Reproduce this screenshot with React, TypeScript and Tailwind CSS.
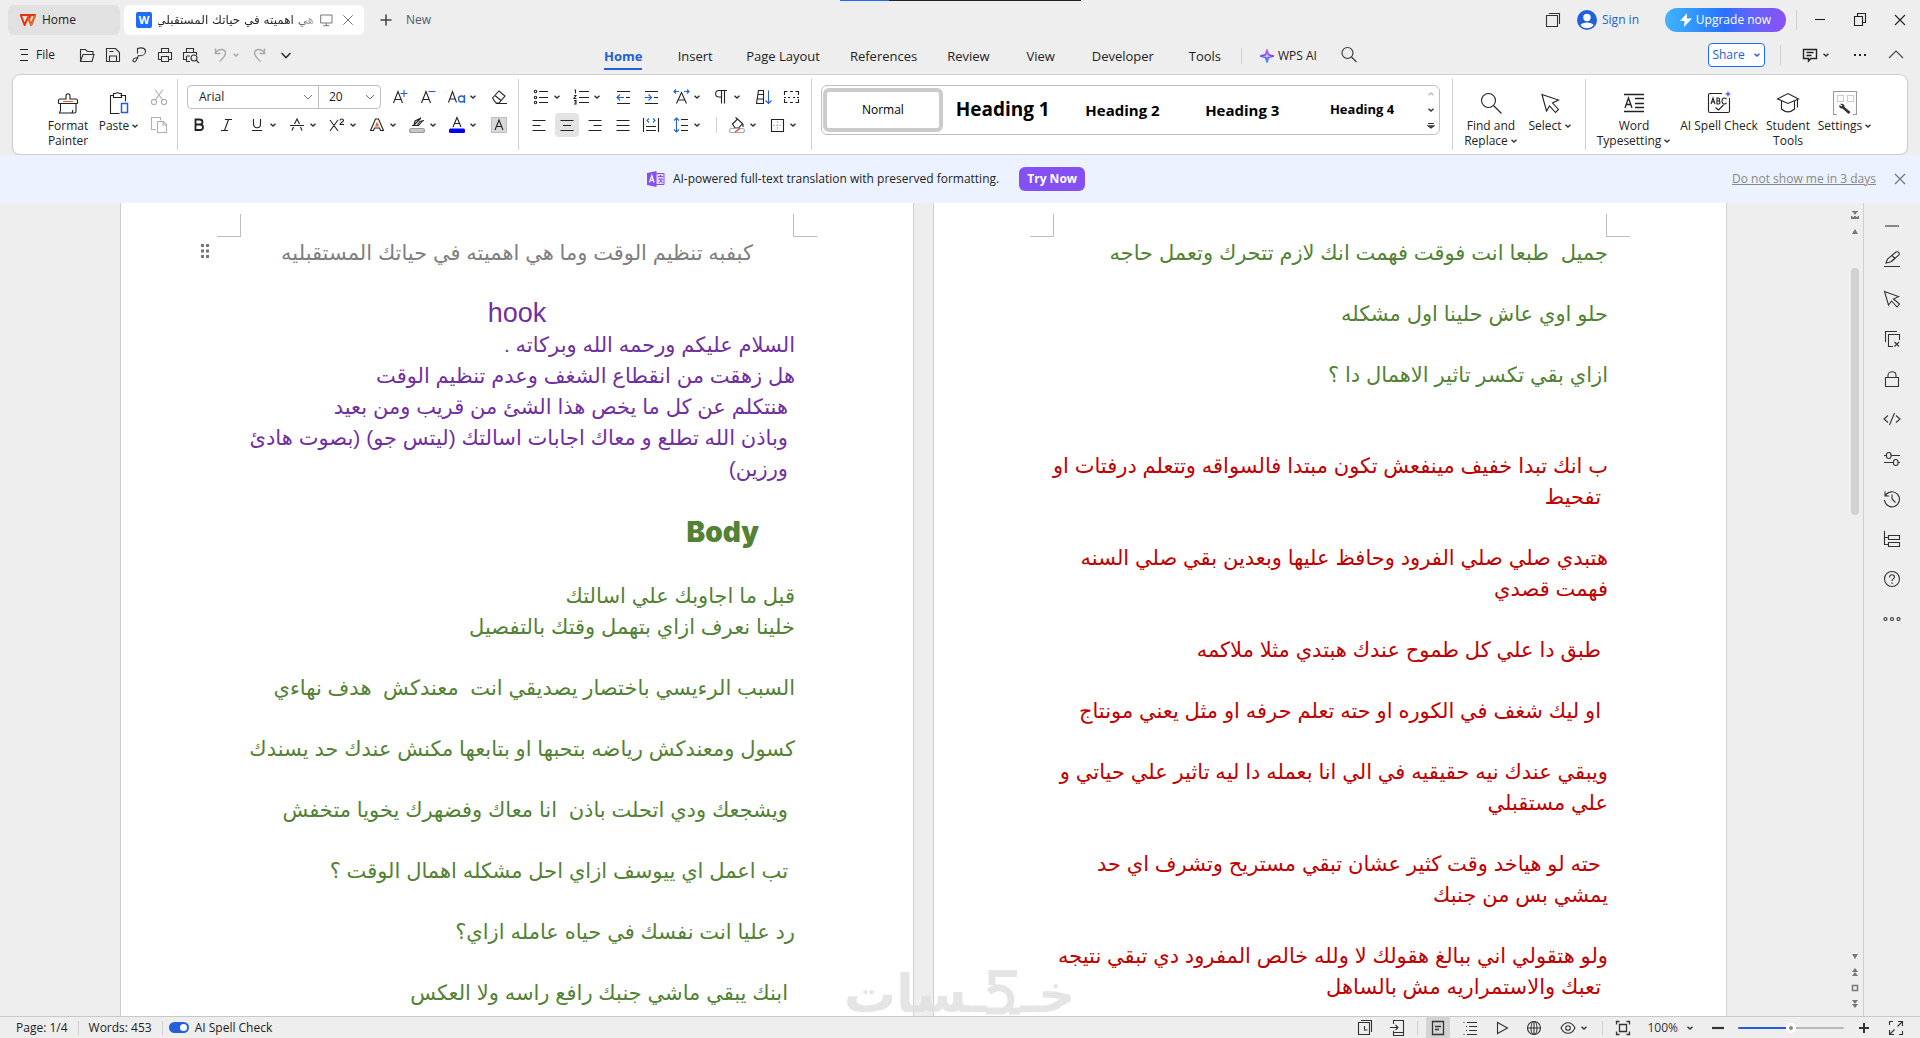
import type { ReactNode } from 'react';
import clsx from 'clsx';

type Line = { text: string; tone?: string; indent?: boolean; center?: boolean; title?: boolean };

const GREEN = 'text-[#538135]';
const PURPLE = 'text-[#7030a0]';
const RED = 'text-[#c00000]';

const blank: Line = { text: '' };

const pageOne: Line[] = [
  { text: 'كبفبه تنظيم الوقت وما هي اهميته في حياتك المستقبليه', tone: 'text-[#7f7f7f]', center: true },
  blank,
  { text: 'hook', tone: PURPLE, center: true },
  { text: 'السلام عليكم ورحمه الله وبركاته .', tone: PURPLE },
  { text: 'هل زهقت من انقطاع الشغف وعدم تنظيم الوقت', tone: PURPLE },
  { text: 'هنتكلم عن كل ما يخص هذا الشئ من قريب ومن بعيد', tone: PURPLE, indent: true },
  { text: 'وباذن الله تطلع و معاك اجابات اسالتك (ليتس جو) (بصوت هادئ', tone: PURPLE, indent: true },
  { text: 'ورزين)', tone: PURPLE, indent: true },
  blank,
  { text: 'Body', tone: GREEN, title: true },
  blank,
  { text: 'قبل ما اجاوبك علي اسالتك', tone: GREEN },
  { text: 'خلينا نعرف ازاي بتهمل وقتك بالتفصيل', tone: GREEN },
  blank,
  { text: 'السبب الرءيسي باختصار يصديقي انت  معندكش  هدف نهاءي', tone: GREEN },
  blank,
  { text: 'كسول ومعندكش رياضه بتحبها او بتابعها مكنش عندك حد يسندك', tone: GREEN },
  blank,
  { text: 'ويشجعك ودي اتحلت باذن  انا معاك وفضهرك يخويا متخفش', tone: GREEN, indent: true },
  blank,
  { text: 'تب اعمل اي ييوسف ازاي احل مشكله اهمال الوقت ؟', tone: GREEN, indent: true },
  blank,
  { text: 'رد عليا انت نفسك في حياه عامله ازاي؟', tone: GREEN },
  blank,
  { text: 'ابنك يبقي ماشي جنبك رافع راسه ولا العكس', tone: GREEN, indent: true },
];

const pageTwo: Line[] = [
  { text: 'جميل  طبعا انت فوقت فهمت انك لازم تتحرك وتعمل حاجه', tone: GREEN },
  blank,
  { text: 'حلو اوي عاش حلينا اول مشكله', tone: GREEN },
  blank,
  { text: 'ازاي بقي تكسر تاثير الاهمال دا ؟', tone: GREEN },
  blank,
  blank,
  { text: 'ب انك تبدا خفيف مينفعش تكون مبتدا فالسواقه وتتعلم درفتات او', tone: RED },
  { text: 'تفحيط', tone: RED, indent: true },
  blank,
  { text: 'هتبدي صلي صلي الفرود وحافظ عليها وبعدين بقي صلي السنه', tone: RED },
  { text: 'فهمت قصدي', tone: RED },
  blank,
  { text: 'طبق دا علي كل طموح عندك هبتدي مثلا ملاكمه', tone: RED, indent: true },
  blank,
  { text: 'او ليك شغف في الكوره او حته تعلم حرفه او مثل يعني مونتاج', tone: RED, indent: true },
  blank,
  { text: 'ويبقي عندك نيه حقيقيه في الي انا بعمله دا ليه تاثير علي حياتي و', tone: RED },
  { text: 'علي مستقبلي', tone: RED },
  blank,
  { text: 'حته لو هياخد وقت كثير عشان تبقي مستريح وتشرف اي حد', tone: RED, indent: true },
  { text: 'يمشي بس من جنبك', tone: RED },
  blank,
  { text: 'ولو هتقولي اني ببالغ هقولك لا ولله خالص المفرود دي تبقي نتيجه', tone: RED },
  { text: 'تعبك والاستمراريه مش بالساهل', tone: RED, indent: true },
];

const menuTabs = ['Home', 'Insert', 'Page Layout', 'References', 'Review', 'View', 'Developer', 'Tools'];

function Icon({ children, className = 'size-6' }: { children: ReactNode; className?: string }) {
  return (
    <svg viewBox="0 0 24 24" fill="none" stroke="currentColor" strokeWidth={1.1} className={clsx('shrink-0', className)} aria-hidden="true">
      {children}
    </svg>
  );
}

function Chevron({ className = 'text-[#333]' }: { className?: string }) {
  return (
    <svg viewBox="0 0 8 8" fill="none" stroke="currentColor" strokeWidth={1.5} className={clsx('size-2 shrink-0', className)} aria-hidden="true">
      <path d="M1.5 2.8 4 5l2.5-2.2" />
    </svg>
  );
}

function Tool({ label, children, className = 'w-7' }: { label: string; children: ReactNode; className?: string }) {
  return (
    <button aria-label={label} className={clsx('h-6 shrink-0 flex items-center justify-center rounded', className)}>
      <Icon>{children}</Icon>
    </button>
  );
}

function DropTool({ label, children }: { label: string; children: ReactNode }) {
  return (
    <button aria-label={label} className="w-10 h-6 shrink-0 flex items-center rounded">
      <Icon>{children}</Icon>
      <Chevron />
    </button>
  );
}

function BigTool({ lines, drop, className, children }: { lines: string[]; drop?: boolean; className: string; children: ReactNode }) {
  return (
    <button className={clsx('shrink-0 flex flex-col items-center pt-4 text-xs leading-[15px] whitespace-nowrap', className)}>
      <Icon>{children}</Icon>
      <span className="mt-[3px] flex flex-col items-center">
        {lines.map((line, i) => (
          <span key={line} className="flex items-center">
            {line}
            {drop && i === lines.length - 1 && <Chevron className="ml-0.5 text-[#333]" />}
          </span>
        ))}
      </span>
    </button>
  );
}

function Rule({ className = 'h-4' }: { className?: string }) {
  return <span className={clsx('w-px shrink-0 bg-[#d0d0d0]', className)} />;
}

function TitleBar() {
  return (
    <header className="h-10 flex items-center pl-2">
      <button className="w-28 h-[30px] flex items-center gap-1.5 pl-3 rounded-md bg-[#e1e1e1]">
        <svg viewBox="0 0 16 12" className="w-4 h-3" fill="none" aria-hidden="true">
          <path d="M0 1h10M0.8 1 4.6 11 8 3.5 11.2 11 15.2 1h-4.5L8.6 6" stroke="#e2340f" strokeWidth={2} />
          <path d="M8 3.5 11.2 11 15.2 1" stroke="#f26a1b" strokeWidth={1.6} />
        </svg>
        Home
      </button>
      <div className="ml-1 w-60 h-[30px] flex items-center pl-3 rounded-md bg-white">
        <span className="size-4 shrink-0 rounded-xs bg-[#1d6bff] text-white text-[11px] leading-4 font-bold text-center">W</span>
        <span dir="rtl" className="ml-1.5 w-[156px] shrink-0 overflow-hidden whitespace-nowrap font-['DejaVu_Sans',sans-serif] text-xs leading-5 bg-linear-to-l from-[#bbb] to-[#222] to-15% bg-clip-text text-transparent">
          هي اهميته في حياتك المستقبلي
        </span>
        <Icon className="ml-1 size-4 text-[#777]">
          <path d="M4 4.500h17v12H4zM8 20.500h9M12.500 17v3" strokeWidth={1.5} />
        </Icon>
        <button aria-label="Close tab" className="ml-1.5 text-[#777]">
          <Icon className="size-4">
            <path d="m5 5 14 14M19 5 5 19" strokeWidth={1.5} />
          </Icon>
        </button>
      </div>
      <button className="ml-4 flex items-center gap-2 text-[#4a5a70]">
        <Icon className="size-3 text-[#444]">
          <path d="M12 1v22M1 12h22" strokeWidth={3} />
        </Icon>
        <span className="pl-1.5">New</span>
      </button>

      <div className="ml-auto flex items-center">
        <button aria-label="Tab list" className="text-[#333]">
          <Icon>
            <path d="M5.500 7.500h11v11h-11zM8 5.500h10.500V16" />
          </Icon>
        </button>
        <button className="ml-3 flex items-center gap-[5px] text-[#2160d8]">
          <svg viewBox="0 0 20 20" className="size-5" aria-hidden="true">
            <circle cx="10" cy="10" r="10" fill="#2160d8" />
            <circle cx="10" cy="7.500" r="3.700" fill="#fff" />
            <path d="M3.500 15c1.500-3.500 11.500-3.500 13 0-3 4.300-10 4.300-13 0z" fill="#fff" />
          </svg>
          Sign in
        </button>
        <button className="ml-[26px] w-[121px] h-6 flex items-center justify-center gap-1 rounded-full bg-linear-to-r from-[#41b4ff] via-[#2a70ff] to-[#8a4ff5] text-white">
          <svg viewBox="0 0 12 14" className="w-3 h-3.5" fill="currentColor" aria-hidden="true">
            <path d="M7 0 0 8h4.500L4 14l8-8.500H7z" />
          </svg>
          Upgrade now
        </button>
        <Rule className="ml-2.5 mr-[3px] h-5" />
        <button aria-label="Minimize" className="w-10 flex justify-center text-[#222]">
          <Icon><path d="M7 11.500h10" /></Icon>
        </button>
        <button aria-label="Restore" className="w-10 flex justify-center text-[#222]">
          <Icon><path d="M6.500 8.500h8v9h-8zM9.500 8.500v-3h8v9h-3" /></Icon>
        </button>
        <button aria-label="Close" className="w-10 flex justify-center text-[#222]">
          <Icon><path d="m7 7 10 10M17 7 7 17" /></Icon>
        </button>
      </div>
    </header>
  );
}

function MenuBar() {
  return (
    <nav className="h-[34px] flex items-center pb-1">
      <div className="flex-1 basis-0 flex items-center text-[#333]">
        <button className="ml-3 flex items-center text-[#222]">
          <Icon><path d="M8 6.500h8M9 11.500h7M8 17.500h8" /></Icon>
          File
        </button>
        <Rule className="ml-2.5 mr-2" />
        <Tool label="Open" className="w-[26px]">
          <path d="M5.500 18.500v-12h5l2 2h5.500v3M5.500 18.500 8 11.500h11l-2 7z" />
        </Tool>
        <Tool label="Save" className="w-[26px]">
          <path d="M5.500 5.500h9l4 4v9h-13zM8.500 18v-5h7v5M8.500 8.500h4" />
        </Tool>
        <Tool label="Export to PDF" className="w-[26px]">
          <path d="M10.500 10.500v-5c5-1.500 8.500 0 8 3.500-.5 3-4 4-7 3.500-1 0-1.500 6.500-4 6.500-2 0-2.500-3.500 1-4h3" />
        </Tool>
        <Tool label="Print" className="w-[26px]">
          <path d="M8.500 9.500v-4h7v4M8 16.500H5.500v-7h13v7H16M8.500 13.500h7v5h-7z" />
        </Tool>
        <Tool label="Print preview" className="w-[26px]">
          <path d="M7.500 9.500v-4h7v4M7 16.500H4.500v-7h13V12M7.500 13v5.500H11M7.500 13H11" />
          <circle cx="15" cy="15" r="3" />
          <path d="m17 17 3 3" />
        </Tool>
        <span className="ml-1 flex text-[#a8a8a8]">
          <button aria-label="Undo" className="w-10 flex items-center">
            <Icon><path d="M7.500 5.500v5h5M7.500 10c3-5 10-4.500 10 0 0 3-2 5-6 8.500" strokeWidth={1.4} /></Icon>
            <Chevron className="text-[#a8a8a8]" />
          </button>
          <Tool label="Redo" className="w-6">
            <path d="M16.500 5.500v5h-5M16.500 10c-3-5-10-4.500-10 0 0 3 2 5 6 8.500" strokeWidth={1.4} />
          </Tool>
        </span>
        <Tool label="More commands" className="w-7">
          <path d="m7.500 10 4.500 4.500 4.500-4.500" strokeWidth={1.6} />
        </Tool>
        <Rule className="ml-1.5" />
      </div>

      <div className="flex items-center pt-0.5">
        {menuTabs.map((tab, i) => (
          <button key={tab} className={clsx('min-w-[72px] px-[15px] flex justify-center whitespace-nowrap text-[13px]', i === 0 ? 'text-[#2160d8] font-bold' : 'text-[#222]')}>
            <span className={clsx('pt-1 pb-0.5 leading-5 border-b-2', i === 0 ? 'border-[#2160d8]' : 'border-transparent')}>{tab}</span>
          </button>
        ))}
        <Rule className="h-4" />
        <button className="ml-[18px] mr-4 flex items-center gap-1 text-[#222] whitespace-nowrap">
          <svg viewBox="0 0 16 18" className="w-3.5 h-4" fill="none" strokeWidth={2} aria-hidden="true">
            <defs>
              <linearGradient id="spark" x1="0" y1="0" x2="0" y2="1">
                <stop offset="0" stopColor="#d06be8" />
                <stop offset="0.55" stopColor="#6a4df5" />
                <stop offset="1" stopColor="#38a8ff" />
              </linearGradient>
            </defs>
            <path d="M8 1.500 9.500 7.500 15 9 9.500 10.500 8 16.500 6.500 10.500 1 9 6.500 7.500z" stroke="url(#spark)" />
          </svg>
          WPS AI
        </button>
      </div>

      <div className="flex-1 basis-0 flex items-center">
        <button aria-label="Search" className="ml-1 text-[#333]">
          <Icon>
            <circle cx="10.500" cy="10" r="5.500" />
            <path d="m14.500 14 5 5" />
          </Icon>
        </button>
        <button className="ml-auto w-[57px] h-6 flex items-center justify-center gap-2 rounded border border-[#1d6bff] bg-white text-[#2160d8]">
          Share
          <Chevron className="text-[#2160d8]" />
        </button>
        <Rule className="ml-[15px] mr-[17px] h-5" />
        <DropTool label="Comments">
          <path d="M5.500 6.500h13v9H13l-2.500 2.500v-2.500h-5zM8.500 9.500h7M8.500 12.500h5" strokeWidth={1.4} />
        </DropTool>
        <button aria-label="More" className="ml-2.5 text-[#222]">
          <Icon><path d="M6 12h2M11 12h2M16 12h2" strokeWidth={2} /></Icon>
        </button>
        <button aria-label="Collapse ribbon" className="mx-3 text-[#444]">
          <Icon><path d="m5 15 7-7 7 7" /></Icon>
        </button>
      </div>
    </nav>
  );
}

function FontGroup() {
  return (
    <div className="pt-2 pl-[7px] pr-[5px] shrink-0">
      <div className="h-7 flex items-center">
        <div className="ml-0.5 mr-[5px] w-[194px] h-6 flex rounded border border-[#bfbfbf] overflow-hidden">
          <label className="relative w-[131px] flex items-center border-r border-[#bfbfbf]">
            <select aria-label="Font" className="w-full h-full pl-[11px] appearance-none">
              <option>Arial</option>
            </select>
            <span className="absolute right-1 pointer-events-none text-[#777]">
              <Icon className="size-3"><path d="m4 8 8 8 8-8" strokeWidth={2} /></Icon>
            </span>
          </label>
          <label className="relative flex-1 flex items-center">
            <select aria-label="Font size" className="w-full h-full pl-2.5 appearance-none">
              <option>20</option>
            </select>
            <span className="absolute right-1 pointer-events-none text-[#777]">
              <Icon className="size-3"><path d="m4 8 8 8 8-8" strokeWidth={2} /></Icon>
            </span>
          </label>
        </div>
        <Tool label="Grow font">
          <path d="m5.500 18 4.500-11.500L14.500 18M7 14.500h6" />
          <path d="M12.500 8.500h7M16 5v7" stroke="#2160d8" />
        </Tool>
        <Tool label="Shrink font">
          <path d="m5.500 18 4.500-11.500L14.500 18M7 14.500h6" />
          <path d="M12.500 6.500h7" stroke="#2160d8" />
        </Tool>
        <span className="w-[3px]" />
        <DropTool label="Change case">
          <path d="m3.500 17.500 4-11 4 11M5 14h5" />
          <path d="M19.500 10v8" stroke="#2160d8" strokeWidth={1.300} />
          <circle cx="16.500" cy="14" r="3" stroke="#2160d8" strokeWidth={1.300} />
        </DropTool>
        <Tool label="Clear formatting">
          <path d="m5.500 13 6.500-7 6 5-6 7H9zM8 10.500l6 5M9 18.500h11" />
        </Tool>
      </div>
      <div className="h-7 flex items-center">
        <Tool label="Bold">
          <path d="M8.500 6.500h4c4 0 4 5 0 5h-4zM8.500 11.500H13c4 0 4 5.500 0 5.500H8.500z" strokeWidth={1.8} />
        </Tool>
        <Tool label="Italic">
          <path d="M10 6.500h7M6 17.500h7M13.500 6.500l-4 11" />
        </Tool>
        <span className="w-1" />
        <DropTool label="Underline">
          <path d="M8.500 6v5c0 5 7 5 7 0V6M7 17.500h10" />
        </DropTool>
        <DropTool label="Strikethrough">
          <path d="M5 12.500h14M9.500 11 12 6l2.500 5M8.500 14 7 17.500M15.500 14l1.500 3.500" />
        </DropTool>
        <DropTool label="Superscript">
          <path d="m5 7 8 11M13 7 5 18M15 7.500c0-2 3.500-2 3.500 0 0 1.500-3.500 2-3.500 4H19" />
        </DropTool>
        <DropTool label="Text effects">
          <path d="m5.500 17.500 5-11.500h3l5 11.500h-3l-1-2.500h-5l-1 2.500z" />
          <path d="m10 13.500 2-5 2 5z" fill="#f0602a" stroke="none" />
        </DropTool>
        <DropTool label="Highlight">
          <path d="M9 12 16 5M7 12.500h6.500L18 7.500M9 12l1-4 6-3M12 12.500l3-4 4-1" />
          <rect x="4.500" y="15.500" width="15" height="4" rx="2" fill="#c8c8c8" stroke="#999" />
        </DropTool>
        <DropTool label="Font color">
          <path d="m8 14 4-9.500L16 14M9.500 10.500h5" />
          <rect x="4" y="15.500" width="16" height="4.500" rx="1.500" fill="#00f" stroke="none" />
        </DropTool>
        <Tool label="Shading">
          <rect x="4.500" y="4.500" width="15" height="15" fill="#d9d9d9" stroke="#c0c0c0" />
          <path d="m8 17 4-10 4 10M9.500 13.500h5" />
        </Tool>
      </div>
    </div>
  );
}

function ParagraphGroup() {
  return (
    <div className="pt-2 px-1.5 shrink-0">
      <div className="h-7 flex items-center pl-1">
        <DropTool label="Bullets">
          <path d="M10 6.500h9M10 12.500h9M10 17.500h9" />
          <circle cx="6.500" cy="6.500" r="1.200" /><circle cx="6.500" cy="12.500" r="1.200" /><circle cx="6.500" cy="17.500" r="1.200" />
        </DropTool>
        <DropTool label="Numbering">
          <path d="M10 6.500h10M10 12.500h10M10 17.500h10" />
          <path d="M5.500 5h1v3.500M5 10.500h2l-2 3h2.500M5 15.500h2v1.500H5.500 7v2H5" />
        </DropTool>
        <Tool label="Decrease indent">
          <path d="M6 6.500h13M15 12.500h4M6 18.500h13" />
          <path d="M13 12.500H6M9 9.500l-3 3 3 3" stroke="#2160d8" />
        </Tool>
        <Tool label="Increase indent">
          <path d="M6 6.500h13M15 12.500h4M6 18.500h13" />
          <path d="M5.500 12.500h7M9.500 9.500l3 3-3 3" stroke="#2160d8" />
        </Tool>
        <span className="w-1" />
        <DropTool label="Character scaling">
          <path d="m7.500 18.500 5-11 5 11M9 15h7" />
          <path d="M10 6.500H5M7 4.500l-2 2 2 2M15 6.500h5M18 4.500l2 2-2 2" stroke="#2160d8" />
        </DropTool>
        <DropTool label="Show marks">
          <path d="M18 5.500h-8c-4.500 0-4.500 6.500 0 6.500h2M12.500 5.500v13M15.500 5.500v13" />
        </DropTool>
        <Tool label="Sort">
          <path d="m5.500 18.500 2-13h5v13zM7 9.500h5M6.500 14h6" />
          <path d="M17.500 5.500v13M14.500 15.500l3 3 3-3" stroke="#2160d8" />
        </Tool>
        <Tool label="Show ruler marks">
          <path d="M5.500 10V6.500h3M5.500 14v3.500h3M19.500 10V6.500h-3M19.500 14v3.500h-3M5 12.500h2M9 12.500h2M14 12.500h2M18 12.500h2M11 6.500h3M11 17.500h3" />
        </Tool>
      </div>
      <div className="h-7 flex items-center">
        <Tool label="Align left"><path d="M5.500 7.500h13M5.500 12.500h8M5.500 17.500h13" /></Tool>
        <Tool label="Align center" className="w-6 mx-0.5 bg-[#e3e3e3]"><path d="M5.500 7.500h13M8 12.500h8M5.500 17.500h13" /></Tool>
        <Tool label="Align right"><path d="M5.500 7.500h13M10.500 12.500h8M5.500 17.500h13" /></Tool>
        <Tool label="Justify"><path d="M5.500 7.500h13M5.500 12.500h13M5.500 17.500h13" /></Tool>
        <Tool label="Distribute">
          <path d="M4.500 5v14M19.500 5v14M7 13.500h10M7 17.500h10" />
          <path d="m10 5.500-2 2 2 2M14 5.500l2 2-2 2" stroke="#2160d8" />
        </Tool>
        <span className="w-1" />
        <DropTool label="Line spacing">
          <path d="M12 6.500h7M12 12.500h7M12 17.500h7" />
          <path d="M7.500 5v14M5 7.500 7.500 5 10 7.500M5 16.500 7.500 19l2.500-2.500" stroke="#2160d8" />
        </DropTool>
        <Rule className="ml-[7px] mr-2 h-4" />
        <DropTool label="Fill">
          <path d="m7.500 11 5-5 5 4.500-4 4.500H10zM12.500 6l-2-1.500M18 11v3" />
          <rect x="4.500" y="15.500" width="15" height="4" rx="2" stroke="#aaa" />
          <path d="m10 19 5-3.500" stroke="#e33" />
        </DropTool>
        <DropTool label="Borders">
          <path d="M6.500 6.500h12v12h-12z" />
          <path d="M12.500 8v9M8 12.500h9" stroke="#bbb" strokeDasharray="2 1" />
        </DropTool>
      </div>
    </div>
  );
}

function StyleGallery() {
  return (
    <div className="mt-2.5 ml-[9px] mr-3 flex-1 min-w-0 h-[50px] flex rounded-md border border-[#bfbfbf] text-black">
      <div className="flex-1 grid grid-cols-5 items-center px-px whitespace-nowrap">
        <button className="h-11 rounded-md border-4 border-[#cbcbcb] text-xs">Normal</button>
        <button className="text-[19px] font-bold">Heading 1</button>
        <button className="text-[15px] font-bold">Heading 2</button>
        <button className="text-[15px] font-bold">Heading 3</button>
        <button className="text-[13px] font-bold">Heading 4</button>
      </div>
      <div className="w-4 flex flex-col items-center justify-between py-1">
        <button aria-label="Previous styles" className="rotate-180"><Chevron className="text-[#bbb]" /></button>
        <button aria-label="Next styles"><Chevron /></button>
        <button aria-label="All styles">
          <svg viewBox="0 0 8 8" fill="none" stroke="#333" className="size-2" aria-hidden="true">
            <path d="M1 1.500h6" /><path d="M1.500 4 4 6l2.500-2z" strokeWidth={1.300} />
          </svg>
        </button>
      </div>
    </div>
  );
}

function Ribbon() {
  return (
    <section className="mx-3 h-[81px] flex rounded-lg border border-[#cfcfcf] bg-white shadow-xs text-[#222]">
      <BigTool lines={['Format', 'Painter']} className="ml-[30px] w-[50px]">
        <path d="M2.500 12.500v-3c0-1 .5-1.500 1.500-1.500h6V5c0-3 4-3 4 0v3h6c1 0 1.500.5 1.500 1.500v3M2.500 12.500h19M4.500 12.500v7l-1 2.500h15c1 0 1.500-.5 1.500-1.500v-8M16 22l1-3" />
        <path d="M7 10.500h10" stroke="#f0602a" />
      </BigTool>
      <BigTool lines={['Paste']} drop className="w-[52px]">
        <path d="M6.500 4.500h-3v18h9M13.500 4.500h5v6M6.500 2.500h2l2-1 2 1h2v4h-8z" />
        <path d="M14.500 12.500h6v9h-6z" stroke="#2160d8" strokeWidth={1.500} />
      </BigTool>
      <div className="w-7 pt-2 text-[#b0b0b0]">
        <div className="h-7 flex items-center">
          <Tool label="Cut">
            <path d="m8 4.500 8 11M16 4.500l-8 11" /><circle cx="7" cy="17" r="2.600" /><circle cx="17" cy="17" r="2.600" />
          </Tool>
        </div>
        <div className="h-7 flex items-center">
          <Tool label="Copy">
            <path d="M9 16.500H4.500v-12h9v3M10.500 8.500h6l3 3v8h-9zM16 9v3h3" />
          </Tool>
        </div>
      </div>
      <Rule className="ml-1 my-1 h-[71px]" />
      <FontGroup />
      <Rule className="my-1 h-[71px]" />
      <ParagraphGroup />
      <Rule className="my-1 h-[71px]" />
      <StyleGallery />
      <Rule className="my-1 h-[71px]" />
      <BigTool lines={['Find and', 'Replace']} drop className="ml-[7px] w-[62px]">
        <circle cx="9.500" cy="9.500" r="7" /><path d="m14.500 14.500 8 8" />
      </BigTool>
      <BigTool lines={['Select']} drop className="w-14">
        <path d="m4 3.500 16.500 5.500-6 3 6 6.500-3 3-6-6.500-3 5z" />
      </BigTool>
      <Rule className="ml-[7px] my-1 h-[71px]" />
      <BigTool lines={['Word', 'Typesetting']} drop className="ml-3 w-[72px]">
        <path d="M2 3.500h20M2 20.500h20M13 7.500h9M13 12.500h9M13 16.500h9M3 17 6.500 7 10 17M4.500 13.500h4" strokeWidth={1.300} />
      </BigTool>
      <BigTool lines={['AI Spell Check']} className="w-[98px]">
        <path d="M15 2.500H3c-1 0-1.500.5-1.500 1.500v16c0 1 .5 1.500 1.500 1.500h18c1 0 1.500-.5 1.500-1.500V7" />
        <path d="M4 13 6 7l2 6M4.700 11h2.600M10 7v6h1.500c2 0 2-3 0-3H10h1.500c1.500 0 1.500-3 0-3zM19.500 8c-3-2.500-4.500 0-4.500 2s1.500 4.500 4.500 2M8.500 16.500l3 2.500 5-5" />
        <path d="m21 0 1 2 2 1-2 1-1 2-1-2-2-1 2-1z" fill="#8450f2" stroke="none" />
      </BigTool>
      <BigTool lines={['Student', 'Tools']} className="w-10">
        <path d="M1.500 8 12 2.500 22.500 8 12 12.500zM5.500 10v8c4 3.500 9 3.500 13 0v-8M21.500 8.500v8" />
      </BigTool>
      <BigTool lines={['Settings']} drop className="mr-[25px] w-[74px]">
        <path d="M4 23.500H.5V.5h23v23H20" stroke="#999" />
        <path d="M4.500 4.500h6v6h-6zM14.500 4.500h6v6h-6z" stroke="#ccc" />
        <path d="M7 13c3-1 5 1 4.500 3l6 5-2 2-6-5.500c-2 .5-4-1-3-3.500l2 1.500 1-1z" fill="#333" stroke="none" />
      </BigTool>
    </section>
  );
}

function Banner() {
  return (
    <aside className="h-12 flex items-center bg-[#ecf2ff]">
      <div className="flex-1 flex items-center justify-center">
        <svg viewBox="0 0 18 16" className="w-[18px] h-4" fill="none" aria-hidden="true">
          <path d="M8 2.500h9v11H8" fill="#e4d6ff" stroke="#8450f2" />
          <path d="M0 2 9.500 0v16L0 14z" fill="#8450f2" />
          <path d="m2.500 11.500 2.300-7 2.200 7M3.300 9.300h3" stroke="#fff" strokeWidth={1.200} />
          <path d="M11 5.500h5M13.500 4v1.500M11.500 8h4l-3.500 4M12.500 8l3 4" stroke="#8450f2" />
        </svg>
        <p className="ml-2 text-[#222]">AI-powered full-text translation with preserved formatting.</p>
        <button className="ml-5 w-[66px] h-6 rounded-md bg-[#8450f2] text-white font-bold">Try Now</button>
      </div>
      <a href="#" className="text-[#888] underline">Do not show me in 3 days</a>
      <button aria-label="Close banner" className="ml-3 mr-2 text-[#777]">
        <Icon><path d="m7 7 10 10M17 7 7 17" strokeWidth={1.300} /></Icon>
      </button>
    </aside>
  );
}

function Sheet({ lines }: { lines: Line[] }) {
  return (
    <article className="w-[794px] shrink-0 border-x border-[#cfcfcf] bg-white overflow-hidden">
      <div className="flex justify-between px-[96px] pt-[11px]">
        <span className="w-6 h-[23px] border-r border-b border-[#bdbdbd]" />
        <span className="w-6 h-[23px] border-l border-b border-[#bdbdbd]" />
      </div>
      <div dir="rtl" className="px-[118px] font-['Liberation_Sans','DejaVu_Sans',sans-serif] text-[21px] whitespace-pre">
        {lines.map((line, i) => {
          if (!line.text) return <div key={i} className="h-[30px]" />;
          if (line.title) {
            return (
              <h2 key={i} className={clsx("pr-9 text-[28px] leading-[36px] font-black font-['Inter',sans-serif]", line.tone)}>
                {line.text}
              </h2>
            );
          }
          return (
            <p key={i} className={clsx('leading-[31px]', line.tone, line.center && 'text-center', line.indent && 'pr-[7px]', line.text === 'hook' && 'text-[27px]')}>
              {line.text}
            </p>
          );
        })}
      </div>
    </article>
  );
}

function Watermark() {
  return (
    <div dir="rtl" className="absolute bottom-0 left-1/2 -ml-[88px] w-60 h-14 flex items-end text-[#dedede]/80 pointer-events-none font-['DejaVu_Sans',sans-serif] font-bold text-[52px] leading-[44px]">
      <span>خـ</span>
      <svg viewBox="0 0 34 46" className="w-[34px] h-[46px]" fill="none" stroke="currentColor" strokeWidth={7} aria-hidden="true">
        <path d="M31 3.500H6V15M3 22c8-8 22-4 22 8 0 5-3 9-8 11H0M34 41H23" />
      </svg>
      <span>ـسات</span>
    </div>
  );
}

function ScrollMark({ children }: { children: ReactNode }) {
  return (
    <svg viewBox="0 0 8 8" className="size-2" fill="#777" aria-hidden="true">{children}</svg>
  );
}

function Workspace() {
  return (
    <main className="flex-1 min-h-0 flex">
      <div className="relative flex-1 min-w-0 flex justify-center gap-[19px] overflow-hidden">
        <Sheet lines={pageOne} />
        <Sheet lines={pageTwo} />
        <button aria-label="Move paragraph" className="absolute left-[201px] top-[41px]">
          <svg viewBox="0 0 8 14" className="w-2 h-3.5" fill="#777" aria-hidden="true">
            <path d="M0 0h3v3H0zM5 0h3v3H5zM0 5.500h3v3H0zM5 5.500h3v3H5zM0 11h3v3H0zM5 11h3v3H5z" />
          </svg>
        </button>
        <Watermark />
      </div>
      <div className="w-4 flex flex-col items-center gap-2 pt-2 pb-2">
        <ScrollMark><path d="M1 0h6v1H1zM2 1h4L4 4zM0 7V5h1.500v1h1.500V5h2v1h1.500V5H8v3H0z" /></ScrollMark>
        <ScrollMark><path d="m4 2 3 5H1z" /></ScrollMark>
        <div className="mt-[25px] w-2 h-[247px] rounded-full bg-[#d1d1d1]" />
        <div className="flex-1" />
        <ScrollMark><path d="M1 2h6L4 7z" /></ScrollMark>
        <ScrollMark><path d="m4 0 3 4H1zM4 4l3 4H1z" /></ScrollMark>
        <ScrollMark><path d="M1.500 1.500h5v5h-5z" fill="none" stroke="#777" strokeWidth={1.500} /></ScrollMark>
        <ScrollMark><path d="M1 0h6L4 4zM1 4h6L4 8z" /></ScrollMark>
      </div>
      <div className="w-[57px] flex flex-col items-center border-l border-[#cfcfcf] text-[#333]">
        <button aria-label="Collapse panel" className="mt-2.5 h-[26px] flex items-center text-[#888]">
          <Icon><path d="M5 12h14" strokeWidth={2} /></Icon>
        </button>
        <SideButton label="Edit"><path d="M4 19.500h16M6 16l1.500-4L16 5c2-1 4 1 3 3l-8.500 7zM12 8.500l3 3-3.500 3" /></SideButton>
        <SideButton label="Select"><path d="m4.500 4.500 14 5-5 2.500 6 5-2.500 3-5.500-6-3 4z" /></SideButton>
        <SideButton label="Clipboard"><path d="M5.500 15V4.500H17M13 19.500H8.500v-12h11V13M14.500 15l4.500 4.500M19 15l-4.500 4.500" /></SideButton>
        <SideButton label="Protect"><path d="M5.500 10.500h13v9h-13zM8 10.500V8.500c0-5 8-5 8 0v2" /></SideButton>
        <SideButton label="Code"><path d="m8 8.500-4 3.500 4 3.500M16 8.500l4 3.500-4 3.500M14.500 6l-5 12" /></SideButton>
        <SideButton label="Adjust">
          <path d="M4 8.500h2.500M11 8.500h9M4 15.500h9M18 15.500h2" /><rect x="6.500" y="5.500" width="4.500" height="6" rx="2.200" /><rect x="13.500" y="12.500" width="4.500" height="6" rx="2.200" />
        </SideButton>
        <SideButton label="History"><path d="M5.500 8.500A7.500 7.500 0 1 1 4.500 13M5 4.500v4.500h4M12 7.500V12l3.500 3.500" /></SideButton>
        <SideButton label="Outline"><path d="M4.500 4v13.500H8M4.500 10.500H8M8.500 8.500h11v4h-11zM8.500 15.500h11v4h-11z" /></SideButton>
        <SideButton label="Help">
          <circle cx="12" cy="12" r="7.500" /><path d="M9.500 10.500c0-4 5-3 5-.5 0 1.500-2.500 2-2.500 4M12 15.500V17" />
        </SideButton>
        <SideButton label="More"><circle cx="5.500" cy="12" r="1.500" /><circle cx="12" cy="12" r="1.500" /><circle cx="18.500" cy="12" r="1.500" /></SideButton>
      </div>
    </main>
  );
}

function SideButton({ label, children }: { label: string; children: ReactNode }) {
  return (
    <button aria-label={label} className="h-10 flex items-center">
      <Icon>{children}</Icon>
    </button>
  );
}

function StatusBar() {
  return (
    <footer className="h-[22px] shrink-0 flex items-center border-t border-[#c8c8c8] text-[#222] whitespace-nowrap">
      <span className="ml-4">Page: 1/4</span>
      <Rule className="mx-2.5 h-3.5" />
      <span>Words: 453</span>
      <Rule className="ml-2.5 mr-1.5 h-3.5" />
      <label className="flex items-center gap-1.5">
        <input type="checkbox" role="switch" defaultChecked className="peer sr-only" />
        <span className="w-5 h-[11px] p-0.5 flex justify-end rounded-full bg-[#2160d8]">
          <span className="size-[7px] rounded-full bg-white" />
        </span>
        AI Spell Check
      </label>

      <div className="ml-auto flex items-center text-[#333]">
        <Tool label="Recent" className="w-8"><path d="M5.500 6.500h11v12h-11zM8 4.500h10.500V16M11.500 10v4h3" /></Tool>
        <Tool label="Send to phone" className="w-8"><path d="M8.500 8V4.500h10v15h-10V15M5 11.500h8M10.500 9l2.500 2.500-2.500 2.500M8.500 16.500h10" /></Tool>
        <Rule className="mx-1 h-3.5" />
        <Tool label="Print layout" className="ml-1 w-6 bg-[#d3d3d3]"><path d="M6.500 5.500h11v13h-11zM9 10.500h6M9 13.500h4" strokeWidth={1.300} /></Tool>
        <Tool label="Outline view" className="ml-1 w-8"><path d="M9 6.500h10M11 10.500h8M11 14.500h8M9 18.500h10M5.500 6.500h1M8 10.500h1M8 14.500h1M5.500 18.500h1" /></Tool>
        <Tool label="Reading view" className="w-8"><path d="M7.500 6.500v11l10-5.500z" /></Tool>
        <Tool label="Web layout" className="w-8">
          <circle cx="12" cy="12" r="6.500" /><ellipse cx="12" cy="12" rx="3" ry="6.500" /><path d="M5.500 12h13M12 5.500v13" />
        </Tool>
        <span className="ml-1.5"><DropTool label="Eye protection">
          <path d="M5 12c3.500-7 10.500-7 14 0-3.500 7-10.500 7-14 0z" /><circle cx="12" cy="12" r="2.300" />
        </DropTool></span>
        <Rule className="mx-1.5 h-3.5" />
        <Tool label="Fit page"><path d="M8.500 8.500h7v7h-7zM5.500 8.500v-3h3M15.500 5.500h3v3M18.500 15.500v3h-3M8.500 18.500h-3v-3" strokeWidth={1.300} /></Tool>
        <button className="ml-2.5 flex items-center gap-2">100% <Chevron /></button>
        <button aria-label="Zoom out" className="ml-3 flex"><Icon><path d="M6 12h12" strokeWidth={2.200} /></Icon></button>
        <input
          type="range"
          aria-label="Zoom"
          defaultValue={50}
          className="mx-2 w-[106px] h-0.5 appearance-none rounded-full bg-linear-to-r from-[#2160d8] from-50% to-[#b9b9b9] to-50% [&::-webkit-slider-thumb]:appearance-none [&::-webkit-slider-thumb]:size-2.5 [&::-webkit-slider-thumb]:rounded-full [&::-webkit-slider-thumb]:border-[3px] [&::-webkit-slider-thumb]:border-white [&::-webkit-slider-thumb]:bg-[#888]"
        />
        <button aria-label="Zoom in" className="flex"><Icon><path d="M7 12h10M12 7v10" strokeWidth={2} /></Icon></button>
        <button aria-label="Full screen" className="ml-2 mr-3 flex">
          <Icon><path d="M14 5.500h4.500V10M18.500 5.500 13.500 10.500M10 18.500H5.500V14M5.500 18.500l5-5M9 5.500H5.500V9M15 18.500h3.500V15" /></Icon>
        </button>
      </div>
    </footer>
  );
}

export default function App() {
  return (
    <div className="relative h-screen flex flex-col overflow-hidden bg-[#eee] font-['Open_Sans',sans-serif] text-xs text-[#222]">
      <div className="absolute top-0 inset-x-0 flex justify-center">
        <span className="w-[49px] h-px bg-[#1d6bff]" />
        <span className="w-[192px] h-px bg-[#222]" />
      </div>
      <TitleBar />
      <MenuBar />
      <Ribbon />
      <Banner />
      <Workspace />
      <StatusBar />
    </div>
  );
}
